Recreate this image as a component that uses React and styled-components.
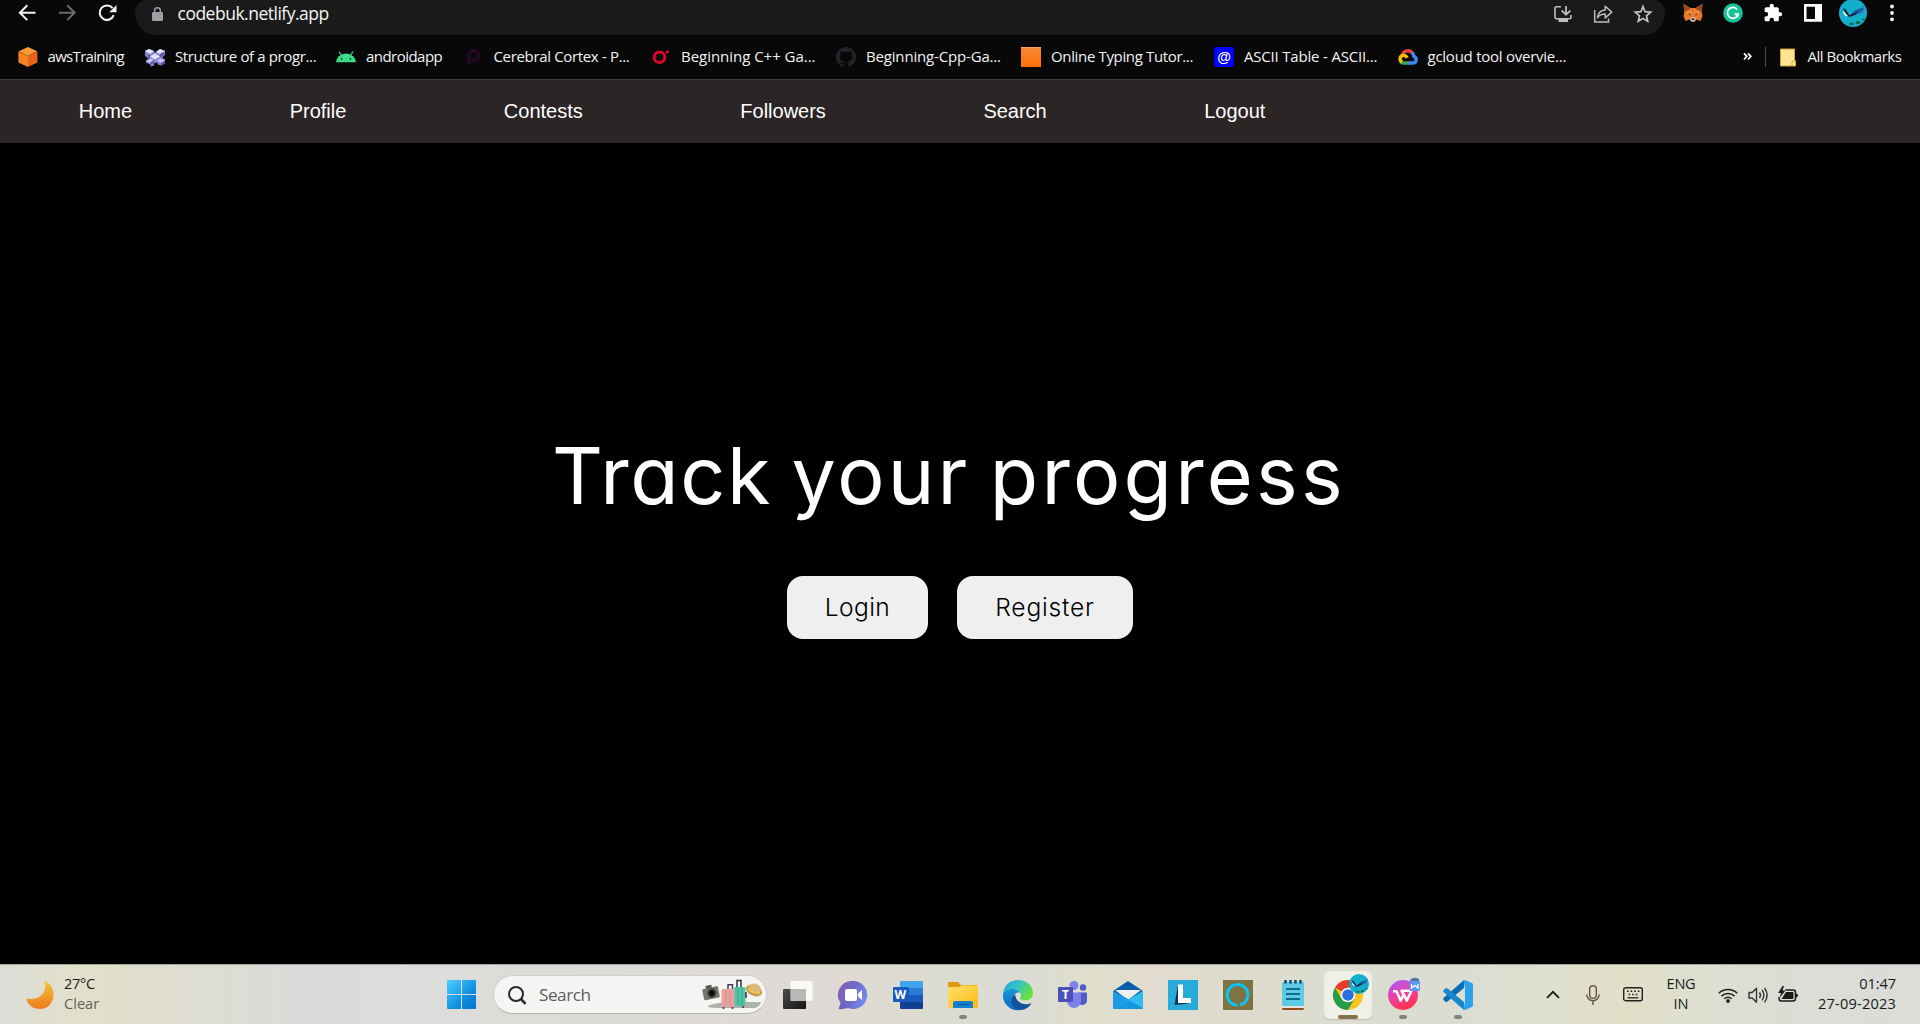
import React from "react";
import styled, { createGlobalStyle } from "styled-components";

const Global = createGlobalStyle`
  * { box-sizing: border-box; }
  html, body { margin: 0; padding: 0; background: #000; overflow: hidden; }
  svg { display: block; flex: none; overflow: visible; }
`;

const ui = `"Open Sans", "Noto Sans", sans-serif`;

const Screen = styled.div`
  width: 1920px;
  height: 1024px;
  display: flex;
  flex-direction: column;
  background: #000;
  font-family: ${ui};
  overflow: hidden;
`;

const Toolbar = styled.header`
  display: flex;
  height: 35px;
  background: #080808;
  flex: none;
`;

const NavButtons = styled.div`
  display: flex;
  gap: 20px;
  width: 135px;
  padding: 3px 0 0 17px;
`;

const Omnibox = styled.div`
  display: flex;
  align-items: flex-start;
  width: 1530px;
  height: 35px;
  padding: 7px 12px 0 17px;
  background: #1a1a1a;
  border-radius: 12px 12px 21px 21px / 13px 13px 22px 22px;
`;

const Url = styled.span`
  flex: 1;
  margin: -7px 0 0 14.5px;
  font-size: 17.5px;
  line-height: 26px;
  letter-spacing: -0.5px;
  color: #f4f4f4;
  white-space: nowrap;
`;

const OmniActions = styled.div`
  display: flex;
  gap: 20px;
  margin-top: -3px;
`;

const Extensions = styled.div`
  display: flex;
  align-items: flex-start;
  gap: 20px;
  padding: 3px 0 0 18px;
`;

const AvatarSlot = styled.div`
  margin: -4px 2px 0 -4px;
`;

const Bookmarks = styled.nav`
  display: flex;
  align-items: center;
  height: 44px;
  padding: 0 0 0 18px;
  background: #080808;
  flex: none;
`;

const Bookmark = styled.div`
  display: flex;
  align-items: center;
  gap: ${(p) => p.$gap || 10}px;
  width: ${(p) => p.$w}px;
  flex: none;
`;

const Label = styled.span`
  padding-bottom: 2px;
  font-size: 15px;
  line-height: 20px;
  letter-spacing: ${(p) => p.$ls}px;
  color: #f2f2f2;
  white-space: nowrap;
`;

const Overflow = styled.div`
  display: flex;
  align-items: center;
  width: 22px;
  margin-left: auto;
`;

const BookmarkDivider = styled.div`
  width: 1px;
  height: 20px;
  margin-right: 14px;
  background: #4a4a4a;
`;

const SiteNav = styled.nav`
  display: flex;
  align-items: center;
  gap: 157.5px;
  height: 64px;
  padding: 0 0 2px 78.8px;
  border-top: 1px solid #3e3e3e;
  background: #2b2525;
  flex: none;
`;

const NavLink = styled.a`
  font: 20px/24px "Liberation Sans", Arial, sans-serif;
  color: #fff;
  white-space: nowrap;
`;

const Hero = styled.main`
  flex: 1;
  display: flex;
  flex-direction: column;
  align-items: center;
  padding-top: 282px;
  background: #000;
`;

const Title = styled.h1`
  margin: 0 22px 0 0;
  font: 400 79px/100px Inter, sans-serif;
  font-feature-settings: "cv11" 1;
  letter-spacing: 2.4px;
  word-spacing: -5px;
  color: #fff;
  white-space: nowrap;
`;

const Word = styled.span`
  letter-spacing: ${(p) => p.$ls}px;
`;

const Actions = styled.div`
  display: flex;
  gap: 29px;
  margin-top: 51px;
`;

const ActionButton = styled.button`
  width: ${(p) => p.$w}px;
  height: 63px;
  padding: 0 0 2px;
  border: 0;
  border-radius: 16px;
  background: #efefef;
  color: #000;
  font: 350 24.6px/30px Inter, sans-serif;
  font-feature-settings: "cv11" 1;
  letter-spacing: ${(p) => p.$ls}px;
`;

const Taskbar = styled.footer`
  display: flex;
  align-items: center;
  height: 60px;
  border-top: 1px solid #a3a39f;
  background: linear-gradient(
    90deg,
    #dcddd7 0, #e2dfca 85px, #e0ddcc 135px, #dbdcd9 290px, #dcdcda 440px,
    #dddbd7 650px, #e0dad6 790px, #dddcd0 930px, #dadbd5 1010px, #dfdecb 1090px,
    #e1dccf 1150px, #dddccf 1280px, #dbddd3 1450px, #dfdfcd 1560px,
    #e2dfc8 1625px, #dddfd0 1700px, #dbddd6 1800px, #daddd8 1920px
  );
  flex: none;
`;

const Weather = styled.div`
  display: flex;
  align-items: center;
  gap: 10px;
  width: 447px;
  padding-left: 26px;
`;

const Lines = styled.div`
  display: flex;
  flex-direction: column;
  align-items: ${(p) => p.$align || "flex-start"};
  width: ${(p) => p.$w}px;
  padding-bottom: 3px;
`;

const Line = styled.span`
  font-size: 14.6px;
  line-height: 20px;
  letter-spacing: ${(p) => p.$ls || 0}px;
  color: ${(p) => p.$c || "#1b1b1b"};
  white-space: nowrap;
`;

const SearchBox = styled.div`
  display: flex;
  align-items: center;
  width: 274px;
  height: 39px;
  margin: 0 16px 0 17px;
  padding: 0 5px 0 14px;
  border: 1px solid #cfcfcc;
  border-bottom-color: #b4b4b0;
  border-radius: 20px;
  background: #f5f5f3;
`;

const SearchText = styled.span`
  flex: 1;
  margin: 0 0 0 13px;
  font-size: 17.2px;
  line-height: 24px;
  letter-spacing: -0.5px;
  color: #5c5c5c;
`;

const Apps = styled.div`
  display: flex;
  align-items: center;
  gap: 7px;
  margin-left: -9px;
`;

const AppSlot = styled.div`
  display: flex;
  flex-direction: column;
  align-items: center;
  width: 48px;
  height: 48px;
  padding-top: 9px;
  border-radius: 6px;
  background: ${(p) => (p.$active ? "#f0f0e9" : "transparent")};
  box-shadow: ${(p) => (p.$active ? "0 1px 1px rgba(0,0,0,.14)" : "none")};
`;

const Indicator = styled.div`
  width: ${(p) => (p.$wide ? 20 : 8)}px;
  height: 4px;
  margin-top: 5px;
  border-radius: 2px;
  background: ${(p) => (p.$wide ? "#83744a" : "#83837e")};
`;

const Tray = styled.div`
  display: flex;
  align-items: center;
  margin-left: auto;
  padding-right: 24px;
`;

const TraySlot = styled.div`
  width: ${(p) => p.$w}px;
  flex: none;
`;

function Icon({ w = 20, h, vb, children }) {
  const hh = h || w;
  return (
    <svg width={w} height={hh} viewBox={vb || `0 0 ${w} ${hh}`} fill="none">
      {children}
    </svg>
  );
}

/* ---------- browser chrome icons ---------- */

const Back = ({ color }) => (
  <Icon w={20}>
    <path d="M18.5 9.7H3.2M10.3 2.3L2.9 9.7l7.4 7.4" stroke={color} strokeWidth="2" />
  </Icon>
);
const Forward = ({ color }) => (
  <Icon w={20}>
    <path d="M2 9.7h15.3M10.2 2.3l7.4 7.4-7.4 7.4" stroke={color} strokeWidth="2" />
  </Icon>
);
const Reload = () => (
  <Icon w={20}>
    <path d="M16.7 12.2A7.2 7.2 0 1 1 15.6 5.2" stroke="#f2f2f2" strokeWidth="2.1" />
    <path d="M19.5 2v7.2h-7.3z" fill="#f2f2f2" />
  </Icon>
);
const Lock = () => (
  <Icon w={11} h={14}>
    <rect y="5" width="11" height="9" rx="1.2" fill="#9aa0a6" />
    <path d="M2.6 5.5V3.6a2.9 2.9 0 0 1 5.8 0v1.9" stroke="#9aa0a6" strokeWidth="1.5" />
  </Icon>
);
const Install = () => (
  <Icon w={20}>
    <path d="M8 2.8H3.5q-1.5 0-1.5 1.5v9q0 1.5 1.5 1.5h13q1.5 0 1.5-1.5v-2.2" stroke="#bdbdbd" strokeWidth="1.6" />
    <path d="M13 2v8.2M8.7 6.5l4.3 4.3 4.3-4.3" stroke="#bdbdbd" strokeWidth="1.8" />
    <path d="M5.500 15h9.500v3h-9.500z" fill="#bdbdbd" />
  </Icon>
);
const Share = () => (
  <Icon w={20}>
    <path d="M1.7 6v12h13.800v-3.500" stroke="#bdbdbd" strokeWidth="1.5" />
    <path d="M4.500 13.700c.6-5 3.200-7.300 7.700-7.600V2.200l6.600 5.900-6.600 5.800v-3.800c-3.300 0-5.700 1-7.700 3.600z" stroke="#bdbdbd" strokeWidth="1.5" strokeLinejoin="round" />
  </Icon>
);
const Star = () => (
  <Icon w={20}>
    <path d="M10 2.500l2.100 5.200 5.600.5-4.200 3.600 1.200 5.500-4.700-2.900-4.700 2.900 1.200-5.500-4.200-3.600 5.600-.5z" stroke="#c4c4c4" strokeWidth="1.7" />
  </Icon>
);
const Fox = () => (
  <Icon w={20} h={20}>
    <path d="M.5 1l7 4h5l7-4-1 7 1 5-2 5-4-1.500-2 2h-3l-2-2L2.500 18l-2-5 1-5z" fill="#e8782a" />
    <path d="M.5 1l7.500 5-5.500 2.500L1 8zM19.500 1L12 6l5.500 2.500L19 8z" fill="#9a4a22" />
    <path d="M4 8l4-2 1 6-5-1zM16 8l-4-2-1 6 5-1z" fill="#f28a35" />
    <path d="M5 10.500l3 .5-.8 1.800zM15 10.500l-3 .5.8 1.800z" fill="#5b3b32" />
    <path d="M7 15l3-1 3 1-1 3.500H8z" fill="#d8c5b5" />
    <path d="M8.300 15.500h3.400l-.4 1.500H8.700z" fill="#20242a" />
  </Icon>
);
const Grammarly = () => (
  <Icon w={20}>
    <circle cx="10" cy="10" r="9.800" fill="#15c39a" />
    <path d="M14.300 6.500A5.500 5.500 0 1 0 15.300 11h-3.800" stroke="#fff" strokeWidth="1.700" />
    <path d="M15.400 10.200v4.500l-3-2.200z" fill="#fff" />
  </Icon>
);
const Puzzle = () => (
  <Icon w={20} vb="0 0 24 24">
    <path fill="#fff" d="M20.500 11H19V7c0-1.100-.9-2-2-2h-4V3.500a2.500 2.500 0 0 0-5 0V5H4c-1.100 0-2 .9-2 2v3.800h1.500a2.700 2.700 0 0 1 0 5.400H2V20c0 1.100.9 2 2 2h3.800v-1.500a2.700 2.700 0 0 1 5.400 0V22H17c1.100 0 2-.9 2-2v-4h1.500a2.500 2.500 0 0 0 0-5z" />
  </Icon>
);
const SidePanel = () => (
  <Icon w={20}>
    <path fill="#fff" fillRule="evenodd" d="M1 1h18v17.800H1zM3.500 3.800v12.200h8.500V3.800z" />
  </Icon>
);
const Bird = ({ size }) => (
  <Icon w={size} vb="0 0 28 28">
    <circle cx="14" cy="14" r="14" fill="#12afca" />
    <path d="M18 12l4-2 2-5 2.500 3-2 6-6 2z" fill="#2f8fb8" />
    <path d="M8 15l3 1 4-4 5-2.500 5-.5-2.500 4-5 1.500-5 3-4 .5z" fill="#1c5aa5" />
    <path d="M9.500 17l5-2.500 5-2-2.500 3-5 2z" fill="#0b1f48" />
    <path d="M4 9l2.500 1 4 6.500-1.500 1.500-2.500-2z" fill="#0d2a45" />
    <path d="M4.300 11.500l5 6-2.500-.3-2.300-2.500z" fill="#eaf6f8" />
    <ellipse cx="12.500" cy="25" rx="2.300" ry="1.300" fill="#12683d" />
    <ellipse cx="19" cy="23.700" rx="2.400" ry="1.400" fill="#12683d" />
    <ellipse cx="24.300" cy="20.500" rx="1.500" ry="1" fill="#12683d" />
  </Icon>
);
const Dots = () => (
  <Icon w={5} h={20}>
    {[3.5, 10, 16.3].map((y) => (
      <circle key={y} cx="3" cy={y} r="1.900" fill="#f2f2f2" />
    ))}
  </Icon>
);

/* ---------- bookmark icons ---------- */

const AwsCube = () => (
  <Icon w={20}>
    <path d="M10 0l9.300 4.200L10 9 .6 4.200z" fill="#fb9a35" />
    <path d="M.4 4.400L10 9v11L.4 15.500z" fill="#f58220" />
    <path d="M19.400 4.400L10 9v11l9.400-4.500z" fill="#e8621c" />
  </Icon>
);
const Bricks = () => (
  <Icon w={20}>
    <path d="M0 4l4-2 5 2 1 2 2-2 3-2 5 2v4l-3 2.500 3 2v4l-4 2-3-1-1-2-3 1v2l-3 1-1-2-4-2v-2.500L4 12 0 9z" fill="#8a84d0" />
    <path d="M0 4l4-2 5 2-4 3zM11 5l4-3 5 2-5 3zM5 9.500l5-3 5 3-5 3z" fill="#e2e2fb" />
    <path d="M1 14l5-2.500 3 1.500-4 3zM12 13.500l4-2 4 2-4 2.500z" fill="#c6c4f3" />
    <path d="M5 7v4l-3-2zM15 7v3l4-2V5zM5 16v2l4-2v-3zM16 16v2.500l4-2v-3z" fill="#5b55a0" />
  </Icon>
);
const Android = () => (
  <Icon w={20}>
    <path d="M0 15.300a10 8.700 0 0 1 20 0z" fill="#3ddc84" />
    <path d="M5.200 8L3 4.500M14.800 8L17 4.500" stroke="#3ddc84" strokeWidth="1.200" />
    <circle cx="5.600" cy="11.800" r=".9" fill="#123" />
    <circle cx="14.400" cy="11.800" r=".9" fill="#123" />
  </Icon>
);
const PMark = () => (
  <Icon w={16} h={20}>
    <path d="M2.700 17V8.500a5 5 0 1 1 5.500 5.300q-2.200 0-3-1" stroke="#270628" strokeWidth="3.200" />
  </Icon>
);
const Ring = () => (
  <Icon w={19} h={20}>
    <circle cx="7.500" cy="10.300" r="5.300" stroke="#d9062f" strokeWidth="3" />
    <circle cx="15.300" cy="4.900" r="1.700" fill="#d9062f" />
  </Icon>
);
const Github = () => (
  <Icon w={20} vb="0 0 16 16">
    <path fill="#20262b" d="M8 0C3.580 0 0 3.580 0 8c0 3.540 2.290 6.530 5.470 7.590.4.070.55-.17.55-.38 0-.19-.01-.82-.01-1.490-2.010.37-2.530-.49-2.690-.94-.09-.23-.48-.94-.82-1.130-.28-.15-.68-.52-.01-.53.63-.01 1.080.58 1.230.82.72 1.210 1.870.87 2.330.66.070-.52.28-.87.51-1.070-1.780-.2-3.640-.89-3.640-3.950 0-.87.31-1.590.82-2.150-.08-.2-.36-1.020.08-2.120 0 0 .67-.21 2.200.82.64-.18 1.320-.27 2-.27s1.360.09 2 .27c1.530-1.040 2.200-.82 2.200-.82.44 1.100.16 1.920.08 2.120.51.56.82 1.270.82 2.150 0 3.070-1.870 3.750-3.650 3.950.29.25.54.73.54 1.480 0 1.070-.01 1.930-.01 2.200 0 .21.15.46.55.38A8.010 8.010 0 0 0 16 8c0-4.420-3.580-8-8-8z" />
  </Icon>
);
const OrangeTile = styled.div`
  width: 20px;
  height: 20px;
  flex: none;
  background: linear-gradient(#f58634, #ff6f05);
  border-top: 1px solid #ffa05a;
`;
const AtTile = styled.div`
  display: flex;
  align-items: center;
  justify-content: center;
  width: 20px;
  height: 20px;
  flex: none;
  padding-bottom: 1px;
  border-radius: 2px;
  background: #0000fb;
  color: #fff;
  font: bold 14px/18px "Liberation Sans", sans-serif;
`;
const GCloud = () => (
  <Icon w={20}>
    <path d="M4.500 7.500C6 3.500 11.500 2 14.800 6.500" stroke="#ea4335" strokeWidth="3.400" />
    <path d="M14 5.700c1.500 1 1.800 2.400 1.900 3.600 3.500 1.600 2.800 6.700-1 6.700H10" stroke="#4285f4" strokeWidth="3.400" />
    <path d="M10.500 16H5.500q-2 0-3-1.300" stroke="#34a853" strokeWidth="3.400" />
    <path d="M4 15.200C1 13 1.600 8.500 5.600 8.400c1.900 0 3 1.200 3.500 2.500" stroke="#fbbc05" strokeWidth="3.400" />
  </Icon>
);
const Chevrons = () => (
  <Icon w={9} h={10}>
    <path d="M1 1.300l2.800 3L1 7.500M5 1.300l2.800 3L5 7.500" stroke="#fff" strokeWidth="1.700" />
  </Icon>
);
const FolderNote = () => (
  <Icon w={16} h={19}>
    <path d="M.5 1h14v11.500h1v5.500H.5z" fill="#ffe591" stroke="#c9a33c" />
    <path d="M12 17.500v-3.500l2.500-1" stroke="#c9a33c" />
  </Icon>
);

/* ---------- taskbar icons ---------- */

const Moon = () => (
  <Icon w={28}>
    <defs>
      <linearGradient id="moon" x1="0" y1="0" x2="0" y2="1">
        <stop stopColor="#f2c637" />
        <stop offset="1" stopColor="#ee7a1c" />
      </linearGradient>
    </defs>
    <path d="M18.500 0C33 6 29 28 14 28 7 28 2 24 0 17.500 13 20 22 12 18.500 0z" fill="url(#moon)" />
  </Icon>
);
const Start = () => (
  <Icon w={29}>
    <defs>
      <linearGradient id="win" x1="0" y1="0" x2="29" y2="29" gradientUnits="userSpaceOnUse">
        <stop stopColor="#4fd0ff" />
        <stop offset=".6" stopColor="#0f8fe3" />
        <stop offset="1" stopColor="#0672cf" />
      </linearGradient>
    </defs>
    <path d="M1 0h13v14H0V1q0-1 1-1zM15 0h13q1 0 1 1v13H15zM0 15h14v14H1q-1 0-1-1zM15 15h14v13q0 1-1 1H15z" fill="url(#win)" />
  </Icon>
);
const Magnifier = () => (
  <Icon w={18}>
    <circle cx="8" cy="8" r="7" stroke="#2a2a2a" strokeWidth="2" />
    <path d="M13 13l4.500 4.800" stroke="#2a2a2a" strokeWidth="2.600" />
  </Icon>
);
const Travel = () => (
  <Icon w={58} h={32}>
    <path d="M4 27.500q6-4 24-4.500l30 0q-1 4-6 6H22q-16 0-18-1.500z" fill="#b0afac" />
    <g transform="rotate(-12 8 14)">
      <rect x="0" y="8.500" width="16" height="11.500" rx="1.500" fill="#77746f" />
      <rect x="4" y="6" width="6" height="3" fill="#55534f" />
      <circle cx="8.800" cy="14.300" r="4.500" fill="#3a3835" />
      <circle cx="8.800" cy="14.300" r="2.600" fill="#0b0b0c" />
    </g>
    <path d="M34 9.500V1.500h4V9" stroke="#2d2e3e" strokeWidth="1.500" />
    <rect x="31" y="8" width="11.500" height="19" rx="1.500" fill="#4fc5a6" />
    <path d="M35 9v17M38.800 9v17" stroke="#38a98b" />
    <path d="M43 13v6" stroke="#27313c" strokeWidth="1.500" />
    <path d="M25 10.500V5.700h4.500v4.800" stroke="#44405a" strokeWidth="1.500" />
    <rect x="18.500" y="10" width="13" height="18" rx="1.500" fill="#e8a3a1" />
    <path d="M22.800 11v16M27 11v16" stroke="#d78e8f" />
    <path d="M20.500 28v2M29.500 28v2M40 27v2" stroke="#383544" strokeWidth="1.500" />
    <ellipse cx="51" cy="11.500" rx="8.500" ry="5.300" transform="rotate(24 51 11.500)" fill="#c89a55" />
    <path d="M46 9c0-6 10-6 12 1l-1 3.500q-6 0-11-4.500z" fill="#dcb97a" />
    <path d="M45 9.500q5 5.500 12 4" stroke="#e8c84c" strokeWidth="2" />
  </Icon>
);
const TaskView = () => (
  <Icon w={30}>
    <defs>
      <linearGradient id="tvd" x1="0" y1="0" x2="1" y2="1">
        <stop stopColor="#4c4b49" />
        <stop offset="1" stopColor="#151515" />
      </linearGradient>
    </defs>
    <rect y="9" width="23" height="20" rx="1" fill="url(#tvd)" />
    <rect x="7.500" y="1" width="22" height="20" rx="1" fill="#fbfbfb" fillOpacity=".93" />
    <path d="M8 9h15v12H8z" fill="#b9b8b6" />
  </Icon>
);
const Chat = () => (
  <Icon w={30}>
    <defs>
      <linearGradient id="chat" x1="0" y1="0" x2="1" y2=".4">
        <stop stopColor="#8d5fae" />
        <stop offset=".5" stopColor="#6f66c4" />
        <stop offset="1" stopColor="#7089e6" />
      </linearGradient>
    </defs>
    <path d="M15 1a14 14 0 1 1-5 27q-5 1.500-9.500 1l2-6A14 14 0 0 1 15 1z" fill="url(#chat)" />
    <rect x="7" y="9" width="12" height="12" rx="2" fill="#fff" />
    <path d="M20 13.500l4-3.500v10l-4-3.500z" fill="#fff" />
  </Icon>
);
const Letter = styled.text`
  font: bold ${(p) => p.$s}px "Open Sans", sans-serif;
  fill: #fff;
`;
const WordApp = () => (
  <Icon w={30}>
    <path d="M7 2q0-1 1-1h21q1 0 1 1v6H7z" fill="#41a5ee" />
    <path d="M7 8h23v7H7z" fill="#2b7cd3" />
    <path d="M7 15h23v7H7z" fill="#185abd" />
    <path d="M7 22h23v6q0 1-1 1H8q-1 0-1-1z" fill="#103f91" />
    <rect y="7" width="16" height="15" rx="1" fill="#185abd" />
    <Letter $s={12} x="1.500" y="18.500">W</Letter>
  </Icon>
);
const Explorer = () => (
  <Icon w={30}>
    <defs>
      <linearGradient id="fold" x1="0" y1="0" x2="1" y2="1">
        <stop stopColor="#ffdf6c" />
        <stop offset="1" stopColor="#fdb913" />
      </linearGradient>
    </defs>
    <path d="M0 3q0-1 1-1h9l3 3h16v3H0z" fill="#dc9a0c" />
    <path d="M0 7h11l2-1.500h16q1 0 1 1V27q0 1-1 1H1q-1 0-1-1z" fill="url(#fold)" />
    <path d="M5 28v-5q0-2 2-2h16q2 0 2 2v5z" fill="#1582d1" />
    <path d="M9 24.500h12" stroke="#0b569d" strokeWidth="1.300" />
  </Icon>
);
const Edge = () => (
  <Icon w={30}>
    <defs>
      <linearGradient id="edgeTop" x1="0" y1="0" x2="1" y2=".5">
        <stop stopColor="#1b9de2" />
        <stop offset=".5" stopColor="#36c5c5" />
        <stop offset="1" stopColor="#6bdf3e" />
      </linearGradient>
      <linearGradient id="edgeL" x1="0" y1="0" x2="0" y2="1">
        <stop stopColor="#1496dc" />
        <stop offset="1" stopColor="#0a6ac4" />
      </linearGradient>
    </defs>
    <path d="M0 14C1 5 7 0 15 0c9 0 15 6 15 13 0 5-4 7.500-8 7.500s-6-1-5-2.500c3-5-2-9-7-9-4 0-8 2-10 5z" fill="url(#edgeTop)" />
    <path d="M0 14c3-6 14-7 17-1-5-1-8 3-7 8 1 6 6 9 10 8.500C9 33-1 24 0 14z" fill="url(#edgeL)" />
    <path d="M12.500 14c-7 4-5 15 5 16 5 0 9-3 11-7-5 2.500-11 1-14-2.500-1.500-2-2-4-2-6.500z" fill="#14539c" />
    <path d="M12.500 14.500c1-3.500 6-2 5 1.500-.5 1.500-1.500 2.500.5 3.500 2 1.500 5 1 7 .5-2 2.500-7 2.500-9.500.5-2-1.500-3-3.500-3-6z" fill="#dddcd0" />
  </Icon>
);
const Teams = () => (
  <Icon w={30}>
    <circle cx="16" cy="5.500" r="4.500" fill="#7b83eb" />
    <circle cx="25" cy="7.500" r="3.200" fill="#5059c9" />
    <path d="M20 12.500h9V20a5 5 0 0 1-9 3z" fill="#5059c9" />
    <path d="M9 12.500h14V21a7 7 0 0 1-14 0z" fill="#7b83eb" />
    <rect y="7" width="15" height="15" rx="1" fill="#4a50b8" />
    <Letter $s={12} x="4" y="18.700">T</Letter>
  </Icon>
);
const Mail = () => (
  <Icon w={30}>
    <path d="M0 11L15 1l15 10-10 8H10z" fill="#0b5cad" />
    <path d="M2 10h26L15 20z" fill="#f2efef" />
    <path d="M0 11l19 10 11 7q0 1-1 1H1q-1 0-1-1z" fill="#1e9be6" />
    <path d="M30 11L14 20 1 29h28q1 0 1-1z" fill="#2fbdf0" />
    <path d="M15 20l15 8q0 1-1 1H1z" fill="#1797e0" />
  </Icon>
);
const LTile = () => (
  <Icon w={30}>
    <path d="M0 0h30v30H0z" fill="#29abda" />
    <path d="M10 4.500L6.500 25l15-1.500L10 22z" fill="#10305e" />
    <path d="M10 4.500h5V18h8v5H10z" fill="#fff" />
  </Icon>
);
const Alexa = () => (
  <Icon w={30}>
    <path d="M0 0h30v30H0z" fill="#7f7343" />
    <path d="M12.500 25A10.300 10.300 0 1 1 17 24.900" stroke="#06c7f2" strokeWidth="3" />
    <path d="M10 23l3.500 3.600 1-.6.500-1.800z" fill="#06c7f2" />
  </Icon>
);
const Notepad = () => (
  <Icon w={30}>
    <path d="M4 25h22v3q0 2-1.500 2h-19Q4 30 4 28z" fill="#914f1e" />
    <path d="M4 24h22v4H4z" fill="#e8e3e0" />
    <rect x="4" y="2" width="22" height="24" rx="1" fill="#5dcbe6" />
    <path d="M8 9h14M8 14h14M8 19h14" stroke="#0f6b8c" strokeWidth="1.800" />
    <path d="M7.500 0v3.500M12.500 0v3.500M17.500 0v3.500M22.500 0v3.500" stroke="#164d66" strokeWidth="2.600" />
  </Icon>
);
const Chrome = () => (
  <Icon w={30}>
    <circle cx="15" cy="15" r="15" fill="#fcc31e" />
    <path d="M15 15L2 7.500A15 15 0 0 1 28 7.500H15z" fill="#e33b2e" />
    <path d="M2 7.500A15 15 0 0 0 15 30l6.500-11.300L15 15 8.500 18.700z" fill="#249c48" />
    <circle cx="15" cy="15" r="7.300" fill="#fff" />
    <circle cx="15" cy="15" r="5.800" fill="#2b70e4" />
    <g transform="translate(16 -6)">
      <Bird size={20} />
    </g>
  </Icon>
);
const Wps = () => (
  <Icon w={30}>
    <defs>
      <linearGradient id="wps" x1=".2" y1="0" x2=".6" y2="1">
        <stop stopColor="#a75cf5" />
        <stop offset=".5" stopColor="#ef3fa5" />
        <stop offset="1" stopColor="#ff3045" />
      </linearGradient>
    </defs>
    <circle cx="15" cy="15" r="15" fill="url(#wps)" />
    <path d="M5 11.200h3.500l4.200 9.600 3-6.800 3 6.800 4.800-10H13.500l3 5.500" stroke="#fff" strokeWidth="2.500" strokeLinejoin="round" />
    <path d="M22 0q4-4 9-1v3l-9 2z" fill="#56739c" />
    <rect x="21.500" y="1" width="10.500" height="10" rx="1" fill="#6095f5" />
    <path d="M23.500 4v4l3.300-2.500L30 8V4" stroke="#fff" strokeWidth="1.300" />
  </Icon>
);
const VsCode = () => (
  <Icon w={30}>
    <path d="M21 0v8L4.500 21.500q-1.300 1-2.300 0L.6 20q-1-1.200.2-2.300z" fill="#0c6db3" />
    <path d="M21 30v-8L4.500 8.500q-1.300-1-2.300 0L.6 10q-1 1.200.2 2.300z" fill="#1787d0" />
    <path d="M22 0l7 3q1 .5 1 2v20q0 1.500-1 2l-7 3q-1 0-1.500-1L22 22V8l-1.500-7q.5-1 1.500-1z" fill="#2ba2ee" />
  </Icon>
);

const Caret = () => (
  <Icon w={14} h={9}>
    <path d="M1 7.800l6-6 6 6" stroke="#1b1b1b" strokeWidth="1.800" />
  </Icon>
);
const Mic = () => (
  <Icon w={14} h={20}>
    <rect x="3.700" y=".7" width="6.600" height="12.500" rx="3.300" stroke="#6c5a45" strokeWidth="1.500" />
    <path d="M.8 9.500a6.200 6.200 0 0 0 12.400 0M7 15.800V20" stroke="#6c5a45" strokeWidth="1.500" />
  </Icon>
);
const Keyboard = () => (
  <Icon w={20} h={15}>
    <rect x=".7" y=".7" width="18.600" height="13" rx="2" stroke="#222" strokeWidth="1.400" />
    <path d="M4 4.300h12.500M5.500 7.500h10" stroke="#222" strokeWidth="1.600" strokeDasharray="1.600 2" />
    <path d="M4.500 10.800h11" stroke="#222" strokeWidth="1.300" />
  </Icon>
);
const Wifi = () => (
  <Icon w={20} h={16}>
    <path d="M.7 6.300a13.200 13.200 0 0 1 18.600 0M3.500 9.100a9.200 9.200 0 0 1 13 0M6.300 11.700a5.200 5.200 0 0 1 7.400 0" stroke="#1f1f1f" strokeWidth="1.500" />
    <circle cx="10" cy="14" r="1.900" fill="#1f1f1f" />
  </Icon>
);
const Speaker = () => (
  <Icon w={20} h={16}>
    <path d="M1 5.500h3.200L8.500 1.200v14L4.200 11H1z" stroke="#333" strokeWidth="1.400" strokeLinejoin="round" />
    <path d="M11.500 5.300q2 2.700 0 5.700M14 3q3.700 5 0 10.300M16.500 1q5.300 7 0 14.300" stroke="#333" strokeWidth="1.400" />
  </Icon>
);
const Battery = () => (
  <Icon w={20} h={18}>
    <path d="M7.500 4H15q2.500 0 2.500 2.500v6q0 2.500-2.500 2.500H3.500Q1 15 1 12.500V11" stroke="#1b1b1b" strokeWidth="1.500" />
    <path d="M18 7.500q2 .3 2 2t-2 2z" fill="#1b1b1b" />
    <path d="M8 6h6.500q1 0 1 1v5q0 1-1 1h-11z" fill="#1b1b1b" />
    <path d="M4.500 0L0 7h3l-1.500 5L7.500 4.500h-3L6 0z" fill="#1b1b1b" />
  </Icon>
);

const bookmarks = [
  { icon: <AwsCube />, text: "awsTraining", w: 127, gap: 9.5, ls: -0.68 },
  { icon: <Bricks />, text: "Structure of a progr...", w: 191, ls: -0.37 },
  { icon: <Android />, text: "androidapp", w: 130, ls: -0.53 },
  { icon: <PMark />, text: "Cerebral Cortex - P...", w: 186, gap: 11.5, ls: -0.34 },
  { icon: <Ring />, text: "Beginning C++ Ga...", w: 184, ls: -0.03 },
  { icon: <Github />, text: "Beginning-Cpp-Ga...", w: 185, ls: -0.17 },
  { icon: <OrangeTile />, text: "Online Typing Tutor...", w: 193, ls: -0.35 },
  { icon: <AtTile>@</AtTile>, text: "ASCII Table - ASCII...", w: 184, ls: -0.19 },
  { icon: <GCloud />, text: "gcloud tool overvie...", w: 180, gap: 9.5, ls: -0.25 },
];

const apps = [
  { name: "taskview", icon: <TaskView /> },
  { name: "chat", icon: <Chat /> },
  { name: "word", icon: <WordApp /> },
  { name: "explorer", icon: <Explorer />, open: true },
  { name: "edge", icon: <Edge /> },
  { name: "teams", icon: <Teams /> },
  { name: "mail", icon: <Mail /> },
  { name: "l", icon: <LTile /> },
  { name: "alexa", icon: <Alexa /> },
  { name: "notepad", icon: <Notepad /> },
  { name: "chrome", icon: <Chrome />, open: true, active: true },
  { name: "wps", icon: <Wps />, open: true },
  { name: "vscode", icon: <VsCode />, open: true },
];

const links = ["Home", "Profile", "Contests", "Followers", "Search", "Logout"];

export default function App() {
  return (
    <Screen>
      <Global />
      <Toolbar>
        <NavButtons>
          <Back color="#f2f2f2" />
          <Forward color="#6b6b6b" />
          <Reload />
        </NavButtons>
        <Omnibox>
          <Lock />
          <Url>codebuk.netlify.app</Url>
          <OmniActions>
            <Install />
            <Share />
            <Star />
          </OmniActions>
        </Omnibox>
        <Extensions>
          <Fox />
          <Grammarly />
          <Puzzle />
          <SidePanel />
          <AvatarSlot>
            <Bird size={28} />
          </AvatarSlot>
          <Dots />
        </Extensions>
      </Toolbar>
      <Bookmarks>
        {bookmarks.map((b) => (
          <Bookmark key={b.text} $w={b.w} $gap={b.gap}>
            {b.icon}
            <Label $ls={b.ls}>{b.text}</Label>
          </Bookmark>
        ))}
        <Overflow>
          <Chevrons />
        </Overflow>
        <BookmarkDivider />
        <Bookmark $w={140} $gap={11.5}>
          <FolderNote />
          <Label $ls={-0.46}>All Bookmarks</Label>
        </Bookmark>
      </Bookmarks>
      <SiteNav>
        {links.map((l) => (
          <NavLink key={l}>{l}</NavLink>
        ))}
      </SiteNav>
      <Hero>
        <Title>
          <Word $ls={1.6}>Track</Word> <Word $ls={3}>your</Word>{" "}
          <Word $ls={3.2}>progress</Word>
        </Title>
        <Actions>
          <ActionButton $w={141} $ls={0.4}>Login</ActionButton>
          <ActionButton $w={176} $ls={0.8}>Register</ActionButton>
        </Actions>
      </Hero>
      <Taskbar>
        <Weather>
          <Moon />
          <Lines>
            <Line $ls={-0.3}>27°C</Line>
            <Line $c="#5e5e5a">Clear</Line>
          </Lines>
        </Weather>
        <Start />
        <SearchBox>
          <Magnifier />
          <SearchText>Search</SearchText>
          <Travel />
        </SearchBox>
        <Apps>
          {apps.map((a) => (
            <AppSlot key={a.name} $active={a.active}>
              {a.icon}
              {a.open && <Indicator $wide={a.active} />}
            </AppSlot>
          ))}
        </Apps>
        <Tray>
          <TraySlot $w={40}><Caret /></TraySlot>
          <TraySlot $w={37}><Mic /></TraySlot>
          <TraySlot $w={38}><Keyboard /></TraySlot>
          <Lines $align="center" $w={40}>
            <Line $ls={-0.3}>ENG</Line>
            <Line>IN</Line>
          </Lines>
          <TraySlot $w={17} />
          <TraySlot $w={30}><Wifi /></TraySlot>
          <TraySlot $w={30}><Speaker /></TraySlot>
          <TraySlot $w={30}><Battery /></TraySlot>
          <Lines $align="flex-end" $w={88}>
            <Line $ls={-0.1}>01:47</Line>
            <Line $ls={0.18}>27-09-2023</Line>
          </Lines>
        </Tray>
      </Taskbar>
    </Screen>
  );
}
